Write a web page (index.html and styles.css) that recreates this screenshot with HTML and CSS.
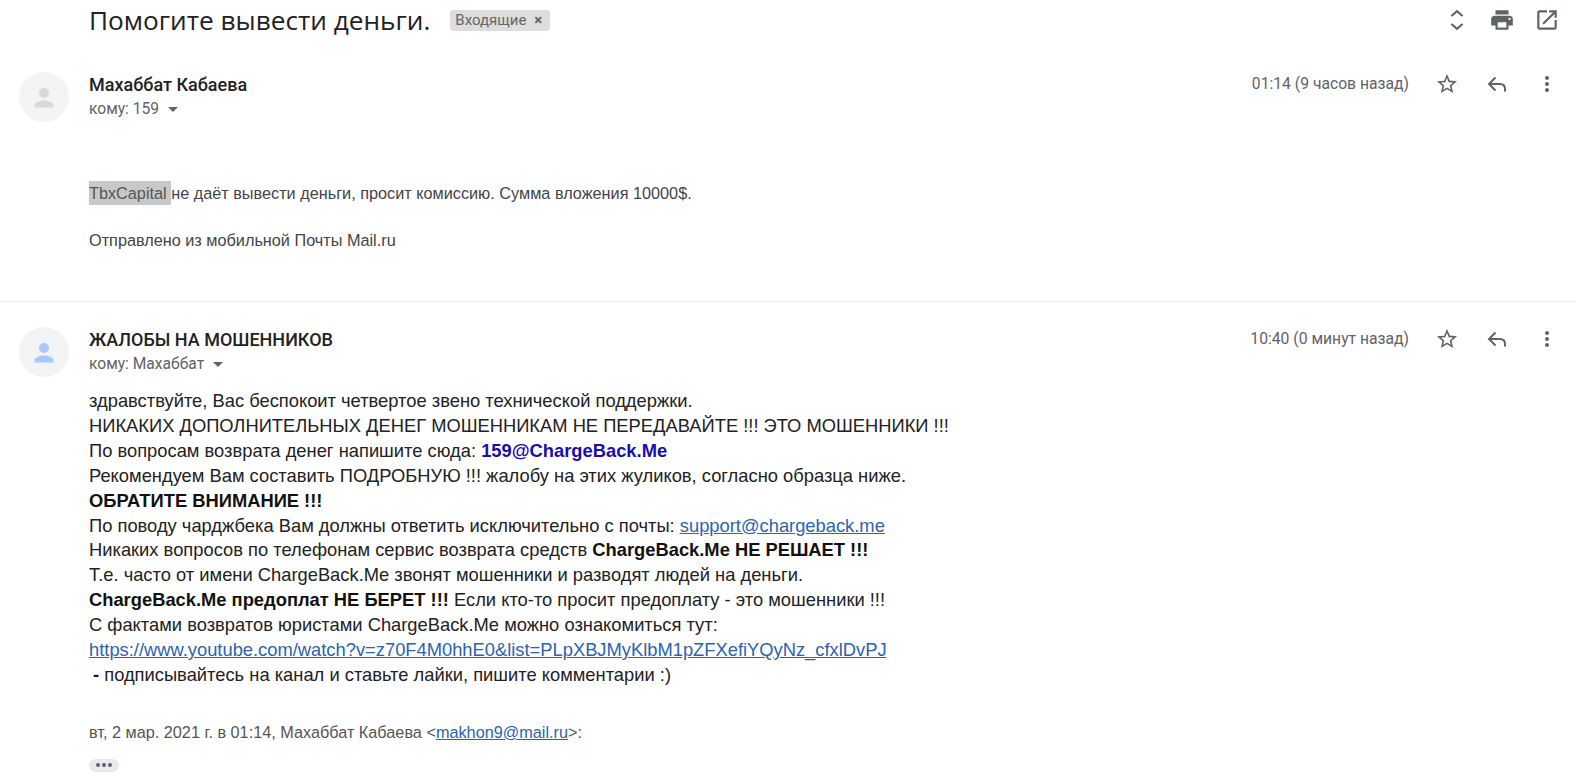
FILE: index.html
```html
<!DOCTYPE html>
<html lang="ru">
<head>
<meta charset="UTF-8">
<title>Помогите вывести деньги.</title>
<link rel="stylesheet" href="styles.css">
</head>
<body>

<div class="subject-bar">
  <h1 class="subject">Помогите вывести деньги.</h1>
  <span class="label">Входящие<span class="label-x">×</span></span>
  <div class="top-icons">
    <svg class="icon" viewBox="0 0 24 24"><path class="chev" d="M6.800 8.300 12 3.800l5.200 4.500M6.800 15.700 12 20.200l5.200-4.500"/></svg>
    <svg class="icon" viewBox="0 0 24 24"><path d="M19 8H5c-1.66 0-3 1.34-3 3v6h4v4h12v-4h4v-6c0-1.66-1.34-3-3-3zm-3 11H8v-5h8v5zm3-7c-.55 0-1-.45-1-1s.45-1 1-1 1 .45 1 1-.45 1-1 1zm-1-9H6v4h12V3z"/></svg>
    <svg class="icon" viewBox="0 0 24 24"><path d="M19 19H5V5h7V3H5c-1.11 0-2 .9-2 2v14c0 1.1.89 2 2 2h14c1.1 0 2-.9 2-2v-7h-2v7zM14 3v2h3.59l-9.83 9.83 1.41 1.41L19 6.41V10h2V3h-7z"/></svg>
  </div>
</div>

<div class="message first">
  <div class="avatar">
    <svg viewBox="0 0 26 26"><circle cx="13" cy="9" r="5"/><path d="M13 16.500c-4 0-9.500 1.800-9.500 4.500v2.500h19V21c0-2.700-5.500-4.500-9.500-4.500z"/></svg>
  </div>
  <div class="msg-main">
    <div class="msg-head">
      <div>
        <div class="sender">Махаббат Кабаева</div>
        <div class="recipient">кому: 159 <span class="caret"></span></div>
      </div>
      <div class="msg-tools">
        <span class="msg-time">01:14 (9 часов назад)</span>
        <svg class="tool" viewBox="0 0 24 24"><path d="M22 9.24l-7.19-.62L12 2 9.19 8.63 2 9.24l5.46 4.73L5.82 21 12 17.27 18.18 21l-1.63-7.03L22 9.24zM12 15.4l-3.76 2.27 1-4.28-3.32-2.88 4.38-.38L12 6.1l1.71 4.04 4.38.38-3.32 2.88 1 4.28L12 15.4z"/></svg>
        <svg class="tool" viewBox="0 0 24 24"><path class="reply" d="M10.500 5.500 4 12l6.500 6.500M4 12h11c3 0 5 2 5 5v2.500"/></svg>
        <svg class="tool" viewBox="0 0 24 24"><path d="M12 8c1.100 0 2-.9 2-2s-.9-2-2-2-2 .9-2 2 .9 2 2 2zm0 2c-1.100 0-2 .9-2 2s.9 2 2 2 2-.9 2-2-.9-2-2-2zm0 6c-1.100 0-2 .9-2 2s.9 2 2 2 2-.9 2-2-.9-2-2-2z"/></svg>
      </div>
    </div>
    <div class="short-body">
      <p><span class="hl">TbxCapital </span>не даёт вывести деньги, просит комиссию. Сумма вложения 10000$.</p>
      <p class="signature">Отправлено из мобильной Почты Mail.ru</p>
    </div>
  </div>
</div>

<div class="message second">
  <div class="avatar blue">
    <svg viewBox="0 0 26 26"><circle cx="13" cy="9" r="5"/><path d="M13 16.500c-4 0-9.500 1.800-9.500 4.500v2.500h19V21c0-2.700-5.500-4.500-9.500-4.500z"/></svg>
  </div>
  <div class="msg-main">
    <div class="msg-head">
      <div>
        <div class="sender">ЖАЛОБЫ НА МОШЕННИКОВ</div>
        <div class="recipient">кому: Махаббат <span class="caret"></span></div>
      </div>
      <div class="msg-tools">
        <span class="msg-time">10:40 (0 минут назад)</span>
        <svg class="tool" viewBox="0 0 24 24"><path d="M22 9.24l-7.19-.62L12 2 9.19 8.63 2 9.24l5.46 4.73L5.82 21 12 17.27 18.18 21l-1.63-7.03L22 9.24zM12 15.4l-3.76 2.27 1-4.28-3.32-2.88 4.38-.38L12 6.1l1.71 4.04 4.38.38-3.32 2.88 1 4.28L12 15.4z"/></svg>
        <svg class="tool" viewBox="0 0 24 24"><path class="reply" d="M10.500 5.500 4 12l6.500 6.500M4 12h11c3 0 5 2 5 5v2.500"/></svg>
        <svg class="tool" viewBox="0 0 24 24"><path d="M12 8c1.100 0 2-.9 2-2s-.9-2-2-2-2 .9-2 2 .9 2 2 2zm0 2c-1.100 0-2 .9-2 2s.9 2 2 2 2-.9 2-2-.9-2-2-2zm0 6c-1.100 0-2 .9-2 2s.9 2 2 2 2-.9 2-2-.9-2-2-2z"/></svg>
      </div>
    </div>
    <div class="long-body">
      <div>здравствуйте, Вас беспокоит четвертое звено технической поддержки.</div>
      <div>НИКАКИХ ДОПОЛНИТЕЛЬНЫХ ДЕНЕГ МОШЕННИКАМ НЕ ПЕРЕДАВАЙТЕ !!! ЭТО МОШЕННИКИ !!!</div>
      <div>По вопросам возврата денег напишите сюда: <b class="mailto">159@ChargeBack.Me</b></div>
      <div>Рекомендуем Вам составить ПОДРОБНУЮ !!! жалобу на этих жуликов, согласно образца ниже.</div>
      <div><b>ОБРАТИТЕ ВНИМАНИЕ !!!</b></div>
      <div>По поводу чарджбека Вам должны ответить исключительно с почты: <a href="#">support@chargeback.me</a></div>
      <div>Никаких вопросов по телефонам сервис возврата средств <b>ChargeBack.Me НЕ РЕШАЕТ !!!</b></div>
      <div>Т.е. часто от имени ChargeBack.Me звонят мошенники и разводят людей на деньги.</div>
      <div><b>ChargeBack.Me предоплат НЕ БЕРЕТ !!!</b> Если кто-то просит предоплату - это мошенники !!!</div>
      <div>С фактами возвратов юристами ChargeBack.Me можно ознакомиться тут:</div>
      <div><a href="#">https://www.youtube.com/watch?v=z70F4M0hhE0&amp;list=PLpXBJMyKlbM1pZFXefiYQyNz_cfxlDvPJ</a></div>
      <div class="indent"><b>-</b> подписывайтесь на канал и ставьте лайки, пишите комментарии :)</div>
    </div>
    <div class="quote-head">вт, 2 мар. 2021 г. в 01:14, Махаббат Кабаева &lt;<a href="#">makhon9@mail.ru</a>&gt;:</div>
    <div class="dots"><i></i><i></i><i></i></div>
  </div>
</div>

</body>
</html>
```

FILE: styles.css
```css
html, body {
  height: 100%;
}
body {
  margin: 0;
  overflow: hidden;
  background: #fff;
  color: #222;
  font-family: "Liberation Sans", Arial, sans-serif;
}

.subject-bar {
  display: flex;
  align-items: center;
  height: 40px;
  padding-left: 89px;
  padding-right: 16px;
}
.subject {
  margin: 0;
  font-family: "Open Sans", "Noto Sans", sans-serif;
  font-size: 26.2px;
  font-weight: 400;
  color: #222;
}
.label {
  display: flex;
  gap: 8px;
  margin-left: 20px;
  padding: 0 8px 0 5px;
  height: 21px;
  line-height: 21px;
  border-radius: 3px;
  background: #ddd;
  color: #666;
  font-family: Roboto, sans-serif;
  font-size: 15px;
}
.label-x {
  font-weight: bold;
}
.top-icons {
  display: flex;
  gap: 19px;
  margin-left: auto;
}
.icon {
  width: 26px;
  height: 26px;
  fill: #5f6368;
}
.icon .chev {
  fill: none;
  stroke: #5f6368;
  stroke-width: 2px;
}

.message {
  display: flex;
  padding-left: 19px;
  padding-right: 17px;
}
.first {
  height: 262px;
  padding-top: 1px;
  box-sizing: border-box;
  border-bottom: 1px solid #eee;
}
.second {
  padding-top: 25px;
}
.avatar {
  flex: none;
  width: 50px;
  height: 50px;
  margin-top: 31px;
  border-radius: 50%;
  background: #f4f4f4;
  display: flex;
  align-items: center;
  justify-content: center;
}
.second .avatar {
  margin-top: 0;
  background: #f1f3f4;
}
.avatar svg {
  width: 26px;
  height: 26px;
  fill: #d8d8d8;
}
.avatar.blue svg {
  fill: #a8c7fa;
}
.msg-main {
  flex: 1;
  padding-left: 20px;
}
.msg-head {
  display: flex;
  justify-content: space-between;
}
.first .msg-head {
  margin-top: 31px;
}
.sender {
  padding-top: 3px;
  font-family: Roboto, sans-serif;
  font-size: 18px;
  font-weight: 500;
  line-height: 20px;
  color: #222;
}
.recipient {
  margin-top: 5px;
  font-family: Roboto, sans-serif;
  font-size: 15.6px;
  line-height: 18px;
  color: #5f6368;
}
.caret {
  display: inline-block;
  margin-left: 5px;
  vertical-align: 2px;
  border-left: 5px solid transparent;
  border-right: 5px solid transparent;
  border-top: 5px solid #5f6368;
}
.msg-tools {
  display: flex;
  align-items: center;
  height: 24px;
  gap: 26px;
}
.msg-time {
  padding-bottom: 2px;
  font-family: Roboto, sans-serif;
  font-size: 15.7px;
  color: #5f6368;
}
.tool {
  width: 24px;
  height: 24px;
  fill: #5f6368;
}
.tool .reply {
  fill: none;
  stroke: #5f6368;
  stroke-width: 2px;
}

.short-body {
  padding-top: 63px;
  font-size: 16.25px;
  line-height: 24px;
  color: #444;
}
.short-body p {
  margin: 0;
}
.signature {
  margin-top: 23px !important;
}
.hl {
  display: inline-block;
  white-space: pre;
  background: #c8c8c8;
  color: #555;
}

.long-body {
  margin-top: 16px;
  font-size: 18.34px;
  line-height: 24.9px;
  color: #222;
}
.long-body b {
  color: #111;
}
.long-body .mailto {
  color: #1a0dab;
}
.long-body a, .quote-head a {
  color: #2a64b0;
}
.indent {
  padding-left: 4px;
}
.quote-head {
  margin-top: 34px;
  font-size: 16.25px;
  line-height: 20px;
  color: #555;
}
.dots {
  display: flex;
  align-items: center;
  justify-content: center;
  gap: 2px;
  width: 30px;
  height: 13px;
  margin-top: 17px;
  border-radius: 7px;
  background: #e8eaed;
}
.dots i {
  width: 4px;
  height: 4px;
  border-radius: 50%;
  background: #5f6368;
}
```
